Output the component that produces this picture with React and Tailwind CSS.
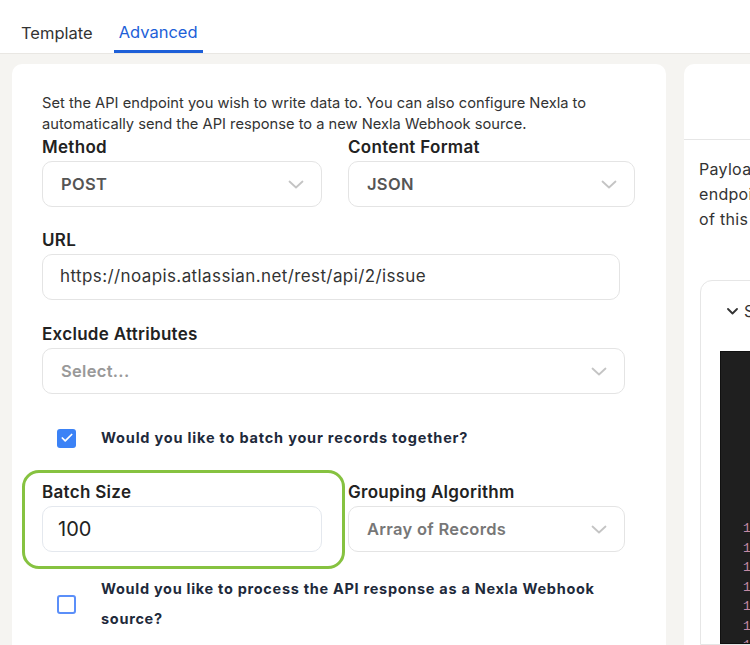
import { Check } from "lucide-react";

const font = { fontFamily: "Inter, 'Noto Sans', sans-serif" };

function Chevron() {
  return (
    <svg width="16" height="9" viewBox="0 0 16 9" fill="none">
      <path
        d="M1.5 1.5 8 7.5l6.5-6"
        stroke="#c4c4c4"
        strokeWidth="1.8"
        strokeLinecap="round"
        strokeLinejoin="round"
      />
    </svg>
  );
}

function Label({ children }) {
  return (
    <div className="text-[17px] leading-6 font-semibold tracking-[0.3px] text-[#222]">
      {children}
    </div>
  );
}

function Select({ value, width, color = "text-[#555]" }) {
  return (
    <div
      className={`mt-[2px] flex h-[46px] items-center justify-between rounded-[10px] border border-[#e4e4e4] bg-white pl-[18px] pr-[17px] ${width}`}
    >
      <span className={`text-[16.5px] font-semibold tracking-[0.3px] ${color}`}>{value}</span>
      <Chevron />
    </div>
  );
}

export default function App() {
  return (
    <div
      className="flex h-[645px] w-[750px] flex-col overflow-hidden bg-[#f5f4f1]"
      style={font}
    >
      <div className="flex h-[54px] shrink-0 items-end border-b border-[#e9e7e3] bg-white pl-[21px]">
        <div className="pb-[7px] text-[16.5px] text-[#333]">Template</div>
        <div className="ml-[21px] border-b-[3px] border-[#1d5fd8] px-[5px] pb-[5px] text-[16.5px] text-[#1d5fd8]">
          Advanced
        </div>
      </div>

      <div className="flex min-h-0 flex-1 gap-[18px] pl-[12px] pt-[10px]">
        <div className="w-[654px] shrink-0 rounded-t-[10px] bg-white pl-[30px] pt-[29px]">
          <p className="text-[14.7px] leading-[21px] text-[#333]">
            Set the API endpoint you wish to write data to. You can also configure Nexla to
            <br />
            automatically send the API response to a new Nexla Webhook source.
          </p>

          <div className="flex gap-[26px]">
            <div>
              <Label>Method</Label>
              <Select value="POST" width="w-[280px]" />
            </div>
            <div>
              <Label>Content Format</Label>
              <Select value="JSON" width="w-[287px]" />
            </div>
          </div>

          <div className="mt-[21px]">
            <Label>URL</Label>
            <div className="mt-[2px] flex h-[46px] w-[578px] items-center rounded-[10px] border border-[#e4e4e4] pl-[17px] text-[17px] tracking-[0.4px] text-[#333]">
              https://noapis.atlassian.net/rest/api/2/issue
            </div>
          </div>

          <div className="mt-[22px]">
            <Label>Exclude Attributes</Label>
            <Select value="Select..." width="w-[583px]" color="text-[#999]" />
          </div>

          <div className="mt-[29px] flex h-[30px] items-center pl-[15px]">
            <div className="flex h-[19px] w-[19px] items-center justify-center rounded-[3px] bg-[#3b82f6]">
              <Check size={14} strokeWidth={3} color="white" />
            </div>
            <span className="ml-[25px] text-[14.5px] font-bold tracking-[0.8px] text-[#1e2a3b]">
              Would you like to batch your records together?
            </span>
          </div>

          <div className="mt-[27px] flex gap-[26px]">
            <div className="relative w-[280px]">
              <div className="pointer-events-none absolute -bottom-[17px] -left-[20px] -right-[23px] -top-[10px] rounded-[17px] border-[3.5px] border-[#86c240]" />
              <Label>Batch Size</Label>
              <div className="mt-[2px] flex h-[46px] items-center rounded-[10px] border border-[#e4e8ee] pl-[15px] text-[20px] text-[#222]">
                100
              </div>
            </div>
            <div>
              <Label>Grouping Algorithm</Label>
              <Select value="Array of Records" width="w-[277px]" color="text-[#777]" />
            </div>
          </div>

          <div className="mt-[22px] flex items-center pl-[15px]">
            <div className="h-[19px] w-[19px] shrink-0 rounded-[3px] border-2 border-[#5b8ff9]" />
            <span className="ml-[25px] w-[530px] text-[14.5px] font-bold leading-[30px] tracking-[0.7px] text-[#1e2a3b]">
              Would you like to process the API response as a Nexla Webhook
              <br />
              source?
            </span>
          </div>
        </div>

        <div className="flex w-[400px] shrink-0 flex-col rounded-t-[10px] bg-white">
          <div className="h-[76px] shrink-0 border-b border-[#e6e6e6]" />
          <p className="whitespace-nowrap pl-[15px] pt-[17px] text-[16px] leading-[25px] tracking-[0.3px] text-[#333]">
            Payload sent to the API for every record
            <br />
            endpoint will follow the structure
            <br />
            of this sample.
          </p>
          <div className="ml-[16px] mt-[48px] flex min-h-0 flex-1 flex-col rounded-t-[12px] border border-[#e6e6e6]">
            <div className="flex items-center gap-[6px] pl-[26px] pt-[18px] text-[16px] text-[#333]">
              <svg width="11" height="7" viewBox="0 0 11 7" fill="none">
                <path d="M1 1l4.5 4.5L10 1" stroke="#333" strokeWidth="1.8" strokeLinecap="round" strokeLinejoin="round" />
              </svg>
              <span>Sample</span>
            </div>
            <div className="ml-[19px] mt-[28px] min-h-0 flex-1 overflow-hidden border border-[#111] bg-[#1f1f1f] pl-[22px] pt-[167px] font-mono text-[13px] leading-[19.5px] text-[#c38aa6]">
              {["10", "11", "12", "13", "14", "15", "16"].map((n) => (
                <div key={n}>{n}</div>
              ))}
            </div>
          </div>
        </div>
      </div>
    </div>
  );
}
